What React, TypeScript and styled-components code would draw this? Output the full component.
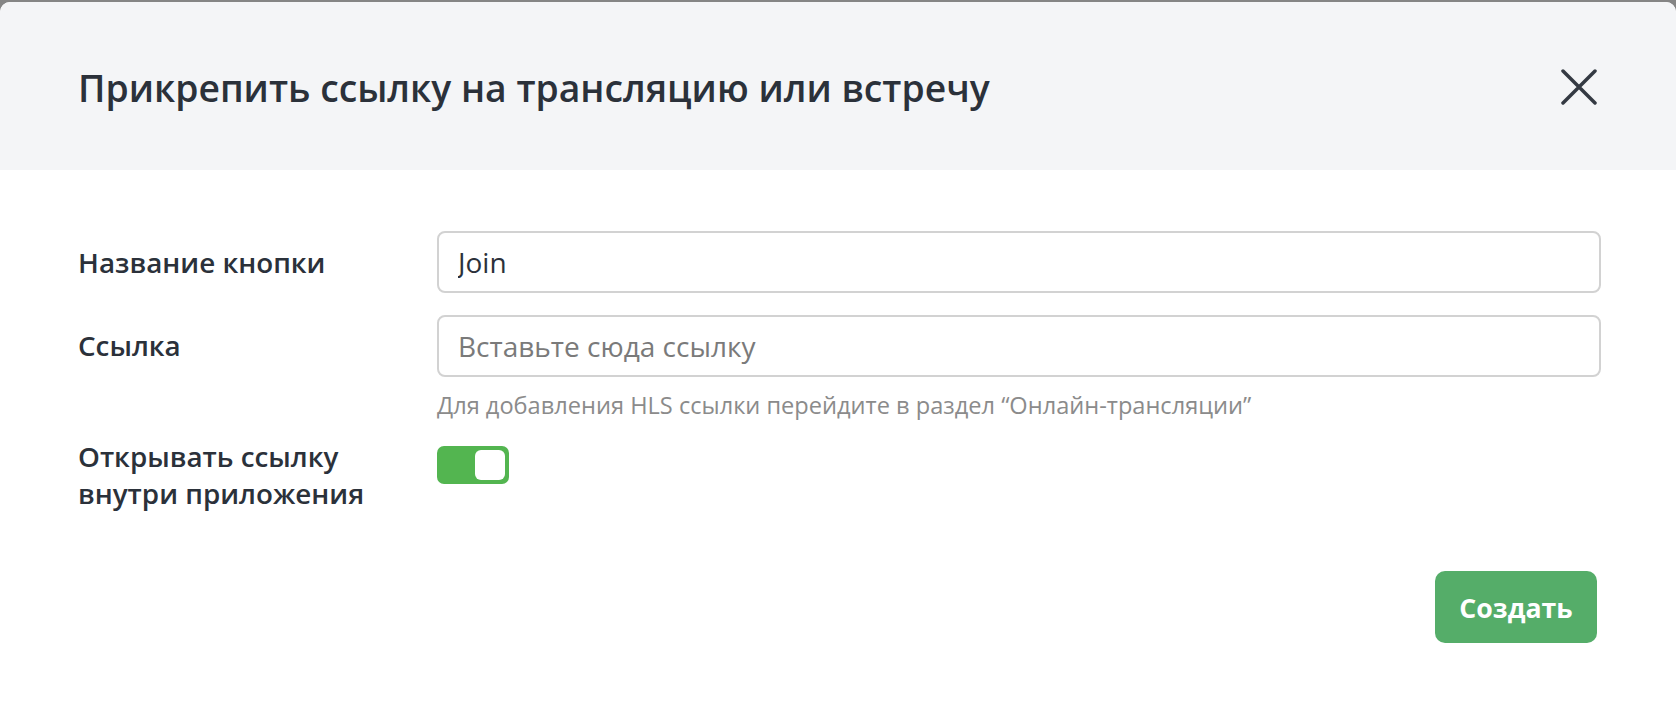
import React from "react";
import styled, { createGlobalStyle } from "styled-components";

const Global = createGlobalStyle`
  html, body { margin: 0; padding: 0; }
  body {
    background: #858585;
    font-family: "Open Sans", "Noto Sans", sans-serif;
    width: 1676px;
    height: 722px;
    overflow: hidden;
  }
  * { box-sizing: border-box; }
`;

const Page = styled.div`
  padding-top: 2px;
  height: 722px;
`;

const Modal = styled.div`
  background: #ffffff;
  border-radius: 10px;
  height: 730px;
  overflow: hidden;
  display: flex;
  flex-direction: column;
`;

const Header = styled.div`
  background: #f4f5f7;
  height: 168px;
  display: flex;
  align-items: center;
  justify-content: space-between;
  padding: 2px 79px 0 78px;
`;

const Title = styled.h1`
  margin: 0;
  font-size: 37.3px;
  font-weight: 600;
  color: #2b313a;
  letter-spacing: 0;
`;

const CloseButton = styled.button`
  border: none;
  background: transparent;
  padding: 0;
  width: 36px;
  height: 36px;
  display: flex;
  align-items: center;
  justify-content: center;
  cursor: pointer;
`;

const Body = styled.div`
  padding: 61px 75px 0 78px;
  display: flex;
  flex-direction: column;
`;

const Row = styled.div<{ $align?: string; $mt?: number }>`
  display: grid;
  grid-template-columns: 359px 1fr;
  align-items: ${(p) => p.$align || "center"};
  margin-top: ${(p) => p.$mt || 0}px;
`;

const Label = styled.label<{ $mt?: number }>`
  font-size: 27.8px;
  font-weight: 600;
  line-height: 37px;
  color: #2b313a;
  margin-top: ${(p) => p.$mt || 0}px;
`;

const Field = styled.div`
  display: flex;
  flex-direction: column;
`;

const Input = styled.input`
  height: 62px;
  width: 100%;
  border: 2px solid #d2d2d2;
  border-radius: 8px;
  padding: 0 19px;
  font-family: "Open Sans", "Noto Sans", sans-serif;
  font-size: 28px;
  color: #2b313a;
  background: #fff;
  outline: none;
  &::placeholder {
    color: #7a7a7a;
  }
`;

const Hint = styled.div`
  margin-top: 13px;
  font-size: 23.6px;
  line-height: 30px;
  color: #8b8b8b;
`;

const Toggle = styled.div<{ $on: boolean }>`
  margin-top: 8px;
  width: 72px;
  height: 38px;
  border-radius: 7px;
  background: ${(p) => (p.$on ? "#53b550" : "#cccccc")};
  padding: 4px;
  display: flex;
  justify-content: ${(p) => (p.$on ? "flex-end" : "flex-start")};
`;

const Knob = styled.div`
  width: 30px;
  height: 30px;
  border-radius: 6px;
  background: #ffffff;
`;

const Footer = styled.div`
  display: flex;
  justify-content: flex-end;
  padding-right: 4px;
  margin-top: 59px;
`;

const PrimaryButton = styled.button`
  width: 162px;
  height: 72px;
  border: none;
  border-radius: 10px;
  background: #55ad69;
  color: #ffffff;
  font-family: "Open Sans", "Noto Sans", sans-serif;
  font-size: 26.7px;
  font-weight: 700;
  cursor: pointer;
`;

export default function App() {
  return (
    <>
      <Global />
      <Page>
        <Modal>
          <Header>
            <Title>Прикрепить ссылку на трансляцию или встречу</Title>
            <CloseButton aria-label="Закрыть">
              <svg width="36" height="36" viewBox="0 0 36 36">
                <path
                  d="M2 2 L34 34 M34 2 L2 34"
                  stroke="#343a43"
                  strokeWidth="3.5"
                  strokeLinecap="round"
                />
              </svg>
            </CloseButton>
          </Header>
          <Body>
            <Row>
              <Label>Название кнопки</Label>
              <Input defaultValue="Join" />
            </Row>
            <Row $align="start" $mt={22}>
              <Label $mt={12}>Ссылка</Label>
              <Field>
                <Input placeholder="Вставьте сюда ссылку" />
                <Hint>Для добавления HLS ссылки перейдите в раздел “Онлайн-трансляции”</Hint>
              </Field>
            </Row>
            <Row $align="start" $mt={18}>
              <Label>
                Открывать ссылку
                <br />
                внутри приложения
              </Label>
              <Toggle $on>
                <Knob />
              </Toggle>
            </Row>
            <Footer>
              <PrimaryButton>Создать</PrimaryButton>
            </Footer>
          </Body>
        </Modal>
      </Page>
    </>
  );
}
